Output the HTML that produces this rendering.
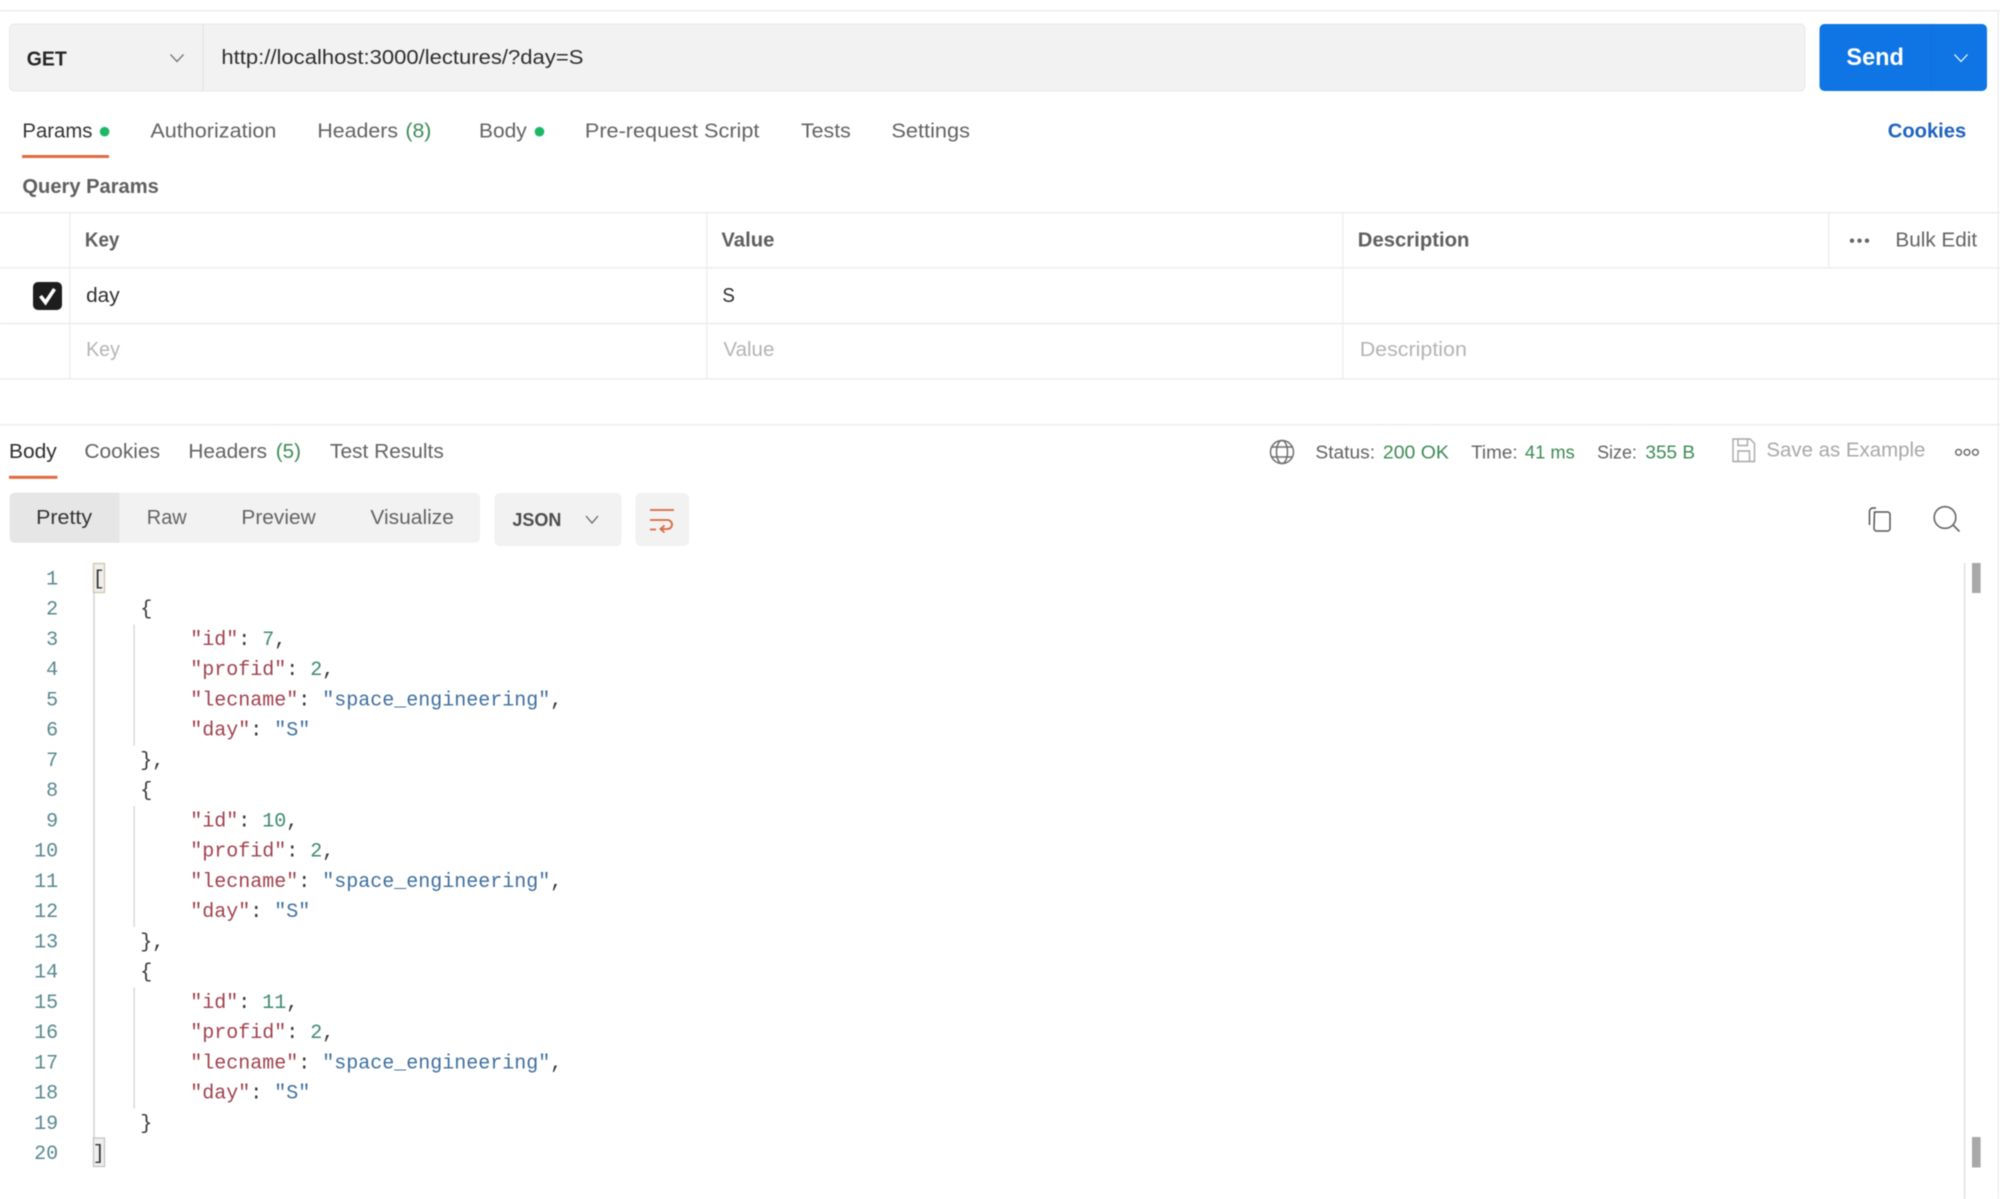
<!DOCTYPE html>
<html><head><meta charset="utf-8"><title>Postman</title>
<style>
html,body{margin:0;padding:0;background:#fff;width:2000px;height:1199px;overflow:hidden}
svg{display:block;filter:blur(.45px)}
text{font-family:"Liberation Sans",sans-serif;font-size:20px;fill:#636363;transform:translateX(-.6px)}
.b{font-weight:bold}
.k{fill:#5f5f5f}
.p{fill:#b4b4b4}
.g{fill:#3c8a55}
.m{font-family:"Liberation Mono",monospace;font-size:20px;white-space:pre;fill:#333;transform:translate(-.8px,-.7px)}
.n{text-anchor:end;fill:#57888f}
.ke{fill:#a0414e}.nu{fill:#3f8a72}.st{fill:#3f6f9f}
</style></head><body>
<svg width="2000" height="1199" viewBox="0 0 2000 1199" xmlns="http://www.w3.org/2000/svg">
<rect width="2000" height="1199" fill="#fff"/>
<!-- top line -->
<rect x="0" y="10" width="2000" height="1.5" fill="#ececec"/>
<rect x="1997.5" y="10" width="1.5" height="1189" fill="#efefef"/>
<!-- URL bar -->
<rect x="9.5" y="24" width="1795.5" height="67" rx="5" fill="#f2f2f2" stroke="#e9e9e9" stroke-width="1"/>
<rect x="202.5" y="24" width="1.3" height="67" fill="#e6e6e6"/>
<text x="27.4" y="65.5" class="b" style="fill:#262626" textLength="40" lengthAdjust="spacingAndGlyphs">GET</text>
<path d="M170.5 54.5l6.5 7 6.5-7" fill="none" stroke="#777" stroke-width="1.3"/>
<text x="222" y="64" style="fill:#2e2e2e" textLength="362" lengthAdjust="spacingAndGlyphs">http://localhost:3000/lectures/?day=S</text>
<!-- Send -->
<rect x="1819.5" y="24" width="167.5" height="67" rx="5" fill="#0f74e4"/>
<rect x="1931" y="24" width="1" height="67" fill="#0e6fdb"/>
<text x="1847" y="65" class="b" style="fill:#fff;font-size:24px" textLength="57.5" lengthAdjust="spacingAndGlyphs">Send</text>
<path d="M1954.5 54.5l6.5 7 6.5-7" fill="none" stroke="#fff" stroke-width="1.2"/>
<!-- Request tabs -->
<text x="23" y="137.7" style="fill:#333" textLength="70" lengthAdjust="spacingAndGlyphs">Params</text>
<circle cx="104.6" cy="131.7" r="4.8" fill="#1db866"/>
<rect x="22" y="155" width="87" height="3" fill="#df6a3e"/>
<text x="151" y="137.7" textLength="126" lengthAdjust="spacingAndGlyphs">Authorization</text>
<text x="318" y="137.7" textLength="80.6" lengthAdjust="spacingAndGlyphs">Headers</text>
<text x="406" y="137.7" class="g" textLength="26" lengthAdjust="spacingAndGlyphs">(8)</text>
<text x="479.6" y="137.7" textLength="47.8" lengthAdjust="spacingAndGlyphs">Body</text>
<circle cx="539.5" cy="131.7" r="4.8" fill="#1db866"/>
<text x="585.5" y="137.7" textLength="174.5" lengthAdjust="spacingAndGlyphs">Pre-request Script</text>
<text x="801.6" y="137.7" textLength="49.8" lengthAdjust="spacingAndGlyphs">Tests</text>
<text x="892" y="137.7" textLength="78.6" lengthAdjust="spacingAndGlyphs">Settings</text>
<text x="1888.4" y="137.7" class="b" style="fill:#1f63bd" textLength="78.4" lengthAdjust="spacingAndGlyphs">Cookies</text>
<text x="23" y="193" class="b k" textLength="136.4" lengthAdjust="spacingAndGlyphs">Query Params</text>
<!-- Table -->
<g fill="#ececec">
<rect x="0" y="212" width="2000" height="1.4"/>
<rect x="0" y="267.2" width="2000" height="1.4"/>
<rect x="0" y="322.8" width="2000" height="1.4"/>
<rect x="0" y="378.2" width="2000" height="1.4"/>
<rect x="0" y="424" width="2000" height="1.4"/>
<rect x="69.3" y="212" width="1.2" height="167"/>
<rect x="706.2" y="212" width="1.2" height="167"/>
<rect x="1342.2" y="212" width="1.2" height="167"/>
<rect x="1828" y="212" width="1.2" height="56"/>
</g>
<text x="85.5" y="246.7" class="b k" textLength="34.5" lengthAdjust="spacingAndGlyphs">Key</text>
<text x="722" y="246.7" class="b k" textLength="53" lengthAdjust="spacingAndGlyphs">Value</text>
<text x="1358.4" y="246.7" class="b k" textLength="111.6" lengthAdjust="spacingAndGlyphs">Description</text>
<circle cx="1852" cy="240.7" r="2.2" fill="#666"/><circle cx="1859.5" cy="240.7" r="2.2" fill="#666"/><circle cx="1867" cy="240.7" r="2.2" fill="#666"/>
<text x="1896" y="246.7" textLength="81.7" lengthAdjust="spacingAndGlyphs">Bulk Edit</text>
<rect x="33" y="282" width="29" height="28" rx="5" fill="#1d1d1d"/>
<path d="M40.5 296l5 6.5 9-13.5" fill="none" stroke="#fff" stroke-width="3.6"/>
<text x="86.7" y="302.2" style="fill:#2e2e2e" textLength="33.5" lengthAdjust="spacingAndGlyphs">day</text>
<text x="723" y="302.2" style="fill:#2e2e2e" textLength="12.5" lengthAdjust="spacingAndGlyphs">S</text>
<text x="86.7" y="356" class="p" textLength="33.8" lengthAdjust="spacingAndGlyphs">Key</text>
<text x="724" y="356" class="p" textLength="51" lengthAdjust="spacingAndGlyphs">Value</text>
<text x="1360.3" y="356" class="p" textLength="107.2" lengthAdjust="spacingAndGlyphs">Description</text>
<!-- Response tabs -->
<text x="9.6" y="458" style="fill:#2e2e2e" textLength="47.8" lengthAdjust="spacingAndGlyphs">Body</text>
<rect x="9" y="475.8" width="48.4" height="3" fill="#df6a3e"/>
<text x="85" y="458" textLength="75.7" lengthAdjust="spacingAndGlyphs">Cookies</text>
<text x="189" y="458" textLength="78.7" lengthAdjust="spacingAndGlyphs">Headers</text>
<text x="276.4" y="458" class="g" textLength="25.2" lengthAdjust="spacingAndGlyphs">(5)</text>
<text x="330.6" y="458" textLength="113.8" lengthAdjust="spacingAndGlyphs">Test Results</text>
<!-- status -->
<g fill="none" stroke="#6f6f6f" stroke-width="1.5">
<circle cx="1282" cy="452" r="11.5"/>
<ellipse cx="1282" cy="452" rx="5.5" ry="11.5"/>
<path d="M1271.5 447h21M1271.5 457h21"/>
</g>
<text x="1316" y="458.3" style="font-size:18px" textLength="59.7" lengthAdjust="spacingAndGlyphs">Status:</text>
<text x="1383.5" y="458.3" class="g" style="font-size:18px" textLength="65.9" lengthAdjust="spacingAndGlyphs">200 OK</text>
<text x="1471.7" y="458.3" style="font-size:18px" textLength="46.5" lengthAdjust="spacingAndGlyphs">Time:</text>
<text x="1525.5" y="458.3" class="g" style="font-size:18px" textLength="49.9" lengthAdjust="spacingAndGlyphs">41 ms</text>
<text x="1597.7" y="458.3" style="font-size:18px" textLength="39.8" lengthAdjust="spacingAndGlyphs">Size:</text>
<text x="1646" y="458.3" class="g" style="font-size:18px" textLength="49.6" lengthAdjust="spacingAndGlyphs">355 B</text>
<path d="M1733 439h17l4.5 4.5V461.5h-21.5zM1738 439v6.5h9.5V439M1738 461.5v-10.5h11.5v10.5" fill="none" stroke="#a8a8a8" stroke-width="1.4"/>
<text x="1767" y="456.7" style="fill:#a8a8a8" textLength="159" lengthAdjust="spacingAndGlyphs">Save as Example</text>
<g fill="none" stroke="#666" stroke-width="1.4"><circle cx="1958.6" cy="452.3" r="2.9"/><circle cx="1967" cy="452.3" r="2.9"/><circle cx="1975.4" cy="452.3" r="2.9"/></g>
<!-- view tabs -->
<rect x="9.6" y="492.7" width="470.4" height="50" rx="5" fill="#f2f2f2"/>
<path d="M119.4 492.7H14.6a5 5 0 0 0-5 5v40a5 5 0 0 0 5 5h104.8z" fill="#e6e6e6"/>
<text x="36.7" y="524" style="fill:#333" textLength="56" lengthAdjust="spacingAndGlyphs">Pretty</text>
<text x="147.4" y="524" textLength="39.9" lengthAdjust="spacingAndGlyphs">Raw</text>
<text x="242" y="524" textLength="74.3" lengthAdjust="spacingAndGlyphs">Preview</text>
<text x="371" y="524" textLength="83.5" lengthAdjust="spacingAndGlyphs">Visualize</text>
<rect x="494.5" y="493" width="127" height="53" rx="5" fill="#f2f2f2"/>
<text x="513" y="526" class="b" style="fill:#4d4d4d;font-size:18px" textLength="49" lengthAdjust="spacingAndGlyphs">JSON</text>
<path d="M586 516l6 7 6-7" fill="none" stroke="#666" stroke-width="1.3"/>
<rect x="635.5" y="493" width="53.5" height="53" rx="5" fill="#f2f2f2"/>
<path d="M650 510h24M650 520h17.5a4.2 4.2 0 0 1 0 9H661M664.5 525.5l-4 3.5 4 3.5M650 529.5h6" fill="none" stroke="#d9683e" stroke-width="1.8"/>
<!-- copy & search -->
<path d="M1876 508h-3a3.5 3.5 0 0 0-3.5 3.5V525" fill="none" stroke="#555" stroke-width="1.5"/>
<path d="M1874.5 512h13a2.5 2.5 0 0 1 2.5 2.5v14a2.5 2.5 0 0 1-2.5 2.5h-11a2.5 2.5 0 0 1-2.5-2.5z" fill="none" stroke="#555" stroke-width="1.5"/>
<circle cx="1945" cy="517.5" r="10.8" fill="none" stroke="#666" stroke-width="1.6"/>
<path d="M1953 525l6.5 6.5" stroke="#666" stroke-width="1.6"/>
<!-- scrollbar -->
<rect x="1964" y="563" width="1.3" height="636" fill="#dcdcdc"/>
<rect x="1972" y="563" width="8.6" height="30" fill="#a8a8a8"/>
<rect x="1972" y="1137" width="8.6" height="30.5" fill="#a8a8a8"/>
<!-- guides -->
<rect x="93.3" y="563" width="1.4" height="604" fill="#cfcfcf"/>
<rect x="133.5" y="624.5" width="1.3" height="121" fill="#d4d4d4"/>
<rect x="133.5" y="806" width="1.3" height="121" fill="#d4d4d4"/>
<rect x="133.5" y="987.6" width="1.3" height="121" fill="#d4d4d4"/>
<rect x="93.5" y="563.5" width="11" height="29" fill="#efefef" stroke="#cfc6a8" stroke-width="1.3"/>
<rect x="93.5" y="1138" width="11" height="28.5" fill="#efefef" stroke="#c4c4c4" stroke-width="1.3"/>
<!-- line numbers -->
<g class="lines">
<text class="m n" x="59" y="585">1</text>
<text class="m n" x="59" y="615.3">2</text>
<text class="m n" x="59" y="645.5">3</text>
<text class="m n" x="59" y="675.8">4</text>
<text class="m n" x="59" y="706">5</text>
<text class="m n" x="59" y="736.3">6</text>
<text class="m n" x="59" y="766.6">7</text>
<text class="m n" x="59" y="796.8">8</text>
<text class="m n" x="59" y="827.1">9</text>
<text class="m n" x="59" y="857.3">10</text>
<text class="m n" x="59" y="887.6">11</text>
<text class="m n" x="59" y="917.9">12</text>
<text class="m n" x="59" y="948.1">13</text>
<text class="m n" x="59" y="978.4">14</text>
<text class="m n" x="59" y="1008.6">15</text>
<text class="m n" x="59" y="1038.9">16</text>
<text class="m n" x="59" y="1069.2">17</text>
<text class="m n" x="59" y="1099.4">18</text>
<text class="m n" x="59" y="1129.7">19</text>
<text class="m n" x="59" y="1159.9">20</text>
</g>
<!-- code -->
<text class="m" x="93.5" y="585">[</text>
<text class="m" x="141" y="615.3">{</text>
<text class="m" x="191" y="645.5"><tspan class="ke">"id"</tspan>: <tspan class="nu">7</tspan>,</text>
<text class="m" x="191" y="675.8"><tspan class="ke">"profid"</tspan>: <tspan class="nu">2</tspan>,</text>
<text class="m" x="191" y="706"><tspan class="ke">"lecname"</tspan>: <tspan class="st">"space_engineering"</tspan>,</text>
<text class="m" x="191" y="736.3"><tspan class="ke">"day"</tspan>: <tspan class="st">"S"</tspan></text>
<text class="m" x="141" y="766.6">},</text>
<text class="m" x="141" y="796.8">{</text>
<text class="m" x="191" y="827.1"><tspan class="ke">"id"</tspan>: <tspan class="nu">10</tspan>,</text>
<text class="m" x="191" y="857.3"><tspan class="ke">"profid"</tspan>: <tspan class="nu">2</tspan>,</text>
<text class="m" x="191" y="887.6"><tspan class="ke">"lecname"</tspan>: <tspan class="st">"space_engineering"</tspan>,</text>
<text class="m" x="191" y="917.9"><tspan class="ke">"day"</tspan>: <tspan class="st">"S"</tspan></text>
<text class="m" x="141" y="948.1">},</text>
<text class="m" x="141" y="978.4">{</text>
<text class="m" x="191" y="1008.6"><tspan class="ke">"id"</tspan>: <tspan class="nu">11</tspan>,</text>
<text class="m" x="191" y="1038.9"><tspan class="ke">"profid"</tspan>: <tspan class="nu">2</tspan>,</text>
<text class="m" x="191" y="1069.2"><tspan class="ke">"lecname"</tspan>: <tspan class="st">"space_engineering"</tspan>,</text>
<text class="m" x="191" y="1099.4"><tspan class="ke">"day"</tspan>: <tspan class="st">"S"</tspan></text>
<text class="m" x="141" y="1129.7">}</text>
<text class="m" x="93.5" y="1159.9">]</text>
</svg>
</body></html>
